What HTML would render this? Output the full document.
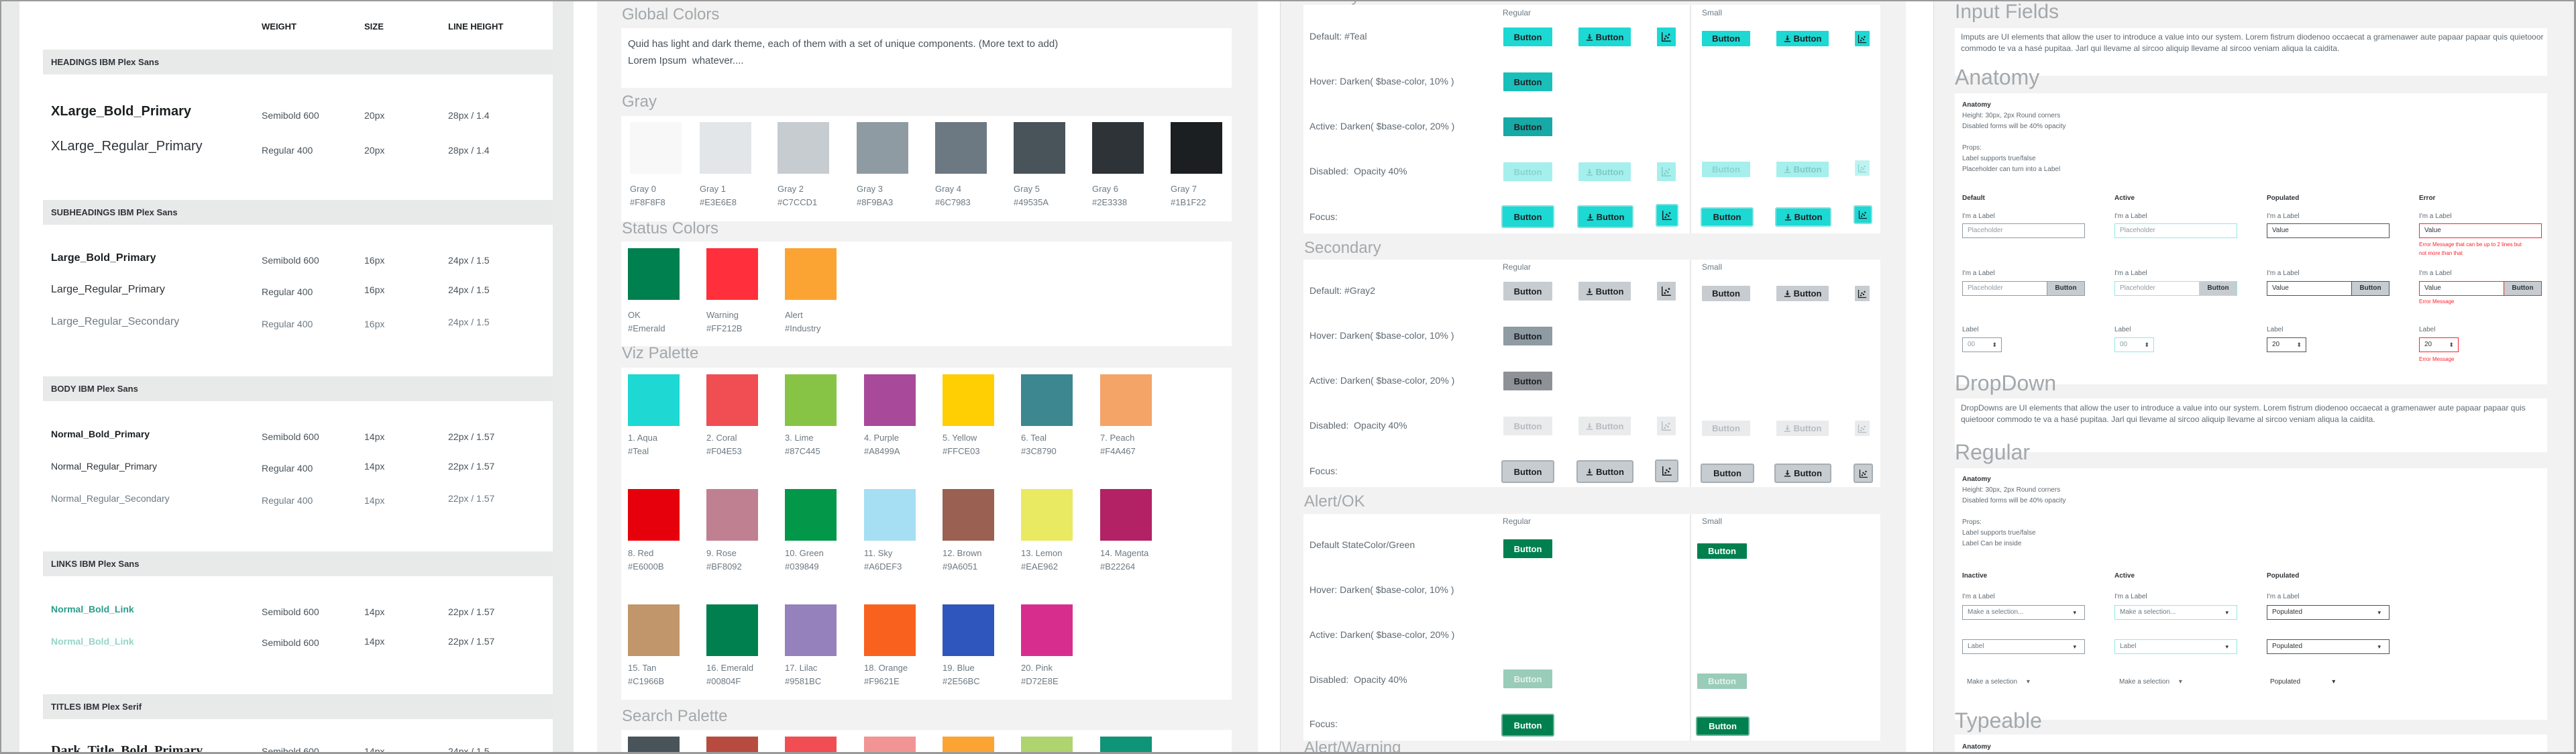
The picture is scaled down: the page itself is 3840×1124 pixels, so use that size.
<!DOCTYPE html>
<html style="width:3840px;height:1124px;overflow:hidden"><head><meta charset="utf-8">
<style>
*{margin:0;padding:0;box-sizing:border-box}
html,body{width:3840px;height:1124px;overflow:hidden}
body{position:relative;background:#fff;font-family:"Liberation Sans",sans-serif}
#root{position:absolute;left:0;top:0;width:3840px;height:1124px;overflow:hidden}
div,span{position:absolute}
.t{white-space:nowrap}
.bar{background:#e8e9e9;left:64px;width:760px;height:37px}
.bl{font-size:13px;font-weight:bold;color:#2e3338;left:12px;top:11px}
.c{font-size:14px;color:#49535a}
.gt{font-size:24px;color:#a3a8ac;left:927px}
.box{background:#fff}
.sw{width:77px;height:77px}
.lb{font-size:13px;color:#6c7983;line-height:16px}
.rl{font-size:14px;color:#5f6a73;left:1952px}
.b{height:28px;width:73px;font-size:13px;font-weight:bold;color:#1b1f22;display:flex;align-items:center;justify-content:center;gap:4px;border-radius:1px}
.s{height:23px;width:72px}
.hd{font-size:12px;color:#6c7983}
.ds{font-size:12px;color:#5f6a73;line-height:17px}
.an{font-size:10px;color:#5f6a73;line-height:16px}
.ip{height:22px;width:183px;border:1px solid #8f9ba3;font-size:10px;color:#8f9ba3;padding-left:7px;line-height:20px;background:#fff}
.ib{right:0;top:0;bottom:0;width:56px;background:#c7ccd1;color:#2e3338;font-weight:bold;text-align:center;border-left:1px solid #8f9ba3}
.sp{height:22px;width:59px;border:1px solid #8f9ba3;font-size:10px;color:#8f9ba3;padding-left:7px;line-height:20px;background:#fff}
.sp:after{content:"⬍";position:absolute;right:6px;top:0;font-size:9px;color:#49535a}
.dd{height:22px;width:183px;border:1px solid #8f9ba3;font-size:10px;color:#6c7983;padding-left:7px;line-height:20px;background:#fff}
.dd:after{content:"▾";position:absolute;right:12px;top:0;font-size:9px;color:#2e3338}
.em{font-size:8px;color:#ff212b;line-height:13px}
</style></head><body><div id="root">

<!-- PANEL 1 -->
<div style="left:0;top:0;width:855px;height:1124px;background:#e9eaea"></div>
<div style="left:29px;top:0;width:795px;height:1124px;background:#fff"></div>
<div class="t" style="left:390px;top:32px;font-size:13px;font-weight:bold;color:#1b1f22">WEIGHT</div>
<div class="t" style="left:543px;top:32px;font-size:13px;font-weight:bold;color:#1b1f22">SIZE</div>
<div class="t" style="left:668px;top:32px;font-size:13px;font-weight:bold;color:#1b1f22">LINE HEIGHT</div>

<div class="bar" style="top:74px"><span class="t bl">HEADINGS IBM Plex Sans</span></div>
<div class="t" style="left:76px;top:155px;font-size:20px;font-weight:bold;color:#1b1f22">XLarge_Bold_Primary</div>
<div class="t c" style="left:390px;top:164px">Semibold 600</div><div class="t c" style="left:543px;top:164px">20px</div><div class="t c" style="left:668px;top:164px">28px / 1.4</div>
<div class="t" style="left:76px;top:207px;font-size:20px;color:#2e3338">XLarge_Regular_Primary</div>
<div class="t c" style="left:390px;top:216px">Regular 400</div><div class="t c" style="left:543px;top:216px">20px</div><div class="t c" style="left:668px;top:216px">28px / 1.4</div>

<div class="bar" style="top:298px"><span class="t bl">SUBHEADINGS IBM Plex Sans</span></div>
<div class="t" style="left:76px;top:376px;font-size:16px;font-weight:bold;color:#1b1f22">Large_Bold_Primary</div>
<div class="t c" style="left:390px;top:380px">Semibold 600</div><div class="t c" style="left:543px;top:380px">16px</div><div class="t c" style="left:668px;top:380px">24px / 1.5</div>
<div class="t" style="left:76px;top:423px;font-size:16px;color:#2e3338">Large_Regular_Primary</div>
<div class="t c" style="left:390px;top:427px">Regular 400</div><div class="t c" style="left:543px;top:424px">16px</div><div class="t c" style="left:668px;top:424px">24px / 1.5</div>
<div class="t" style="left:76px;top:471px;font-size:16px;color:#6c7983">Large_Regular_Secondary</div>
<div class="t c" style="left:390px;top:475px;color:#6c7983">Regular 400</div><div class="t c" style="left:543px;top:475px;color:#6c7983">16px</div><div class="t c" style="left:668px;top:472px;color:#6c7983">24px / 1.5</div>

<div class="bar" style="top:561px"><span class="t bl">BODY IBM Plex Sans</span></div>
<div class="t" style="left:76px;top:639px;font-size:14px;font-weight:bold;color:#1b1f22">Normal_Bold_Primary</div>
<div class="t c" style="left:390px;top:643px">Semibold 600</div><div class="t c" style="left:543px;top:643px">14px</div><div class="t c" style="left:668px;top:643px">22px / 1.57</div>
<div class="t" style="left:76px;top:687px;font-size:14px;color:#2e3338">Normal_Regular_Primary</div>
<div class="t c" style="left:390px;top:690px">Regular 400</div><div class="t c" style="left:543px;top:687px">14px</div><div class="t c" style="left:668px;top:687px">22px / 1.57</div>
<div class="t" style="left:76px;top:735px;font-size:14px;color:#6c7983">Normal_Regular_Secondary</div>
<div class="t c" style="left:390px;top:738px;color:#6c7983">Regular 400</div><div class="t c" style="left:543px;top:738px;color:#6c7983">14px</div><div class="t c" style="left:668px;top:735px;color:#6c7983">22px / 1.57</div>

<div class="bar" style="top:822px"><span class="t bl">LINKS IBM Plex Sans</span></div>
<div class="t" style="left:76px;top:900px;font-size:14px;font-weight:bold;color:#2a9d8a">Normal_Bold_Link</div>
<div class="t c" style="left:390px;top:904px">Semibold 600</div><div class="t c" style="left:543px;top:904px">14px</div><div class="t c" style="left:668px;top:904px">22px / 1.57</div>
<div class="t" style="left:76px;top:948px;font-size:14px;font-weight:bold;color:#95d5c8">Normal_Bold_Link</div>
<div class="t c" style="left:390px;top:950px">Semibold 600</div><div class="t c" style="left:543px;top:948px">14px</div><div class="t c" style="left:668px;top:948px">22px / 1.57</div>

<div class="bar" style="top:1035px"><span class="t bl">TITLES IBM Plex Serif</span></div>
<div class="t" style="left:76px;top:1108px;font-size:20px;font-weight:bold;color:#1b1f22;font-family:'Liberation Serif',serif">Dark_Title_Bold_Primary</div>
<div class="t c" style="left:390px;top:1112px">Semibold 600</div><div class="t c" style="left:543px;top:1112px">14px</div><div class="t c" style="left:668px;top:1112px">24px / 1.5</div>

<!-- PANEL 2 -->
<div style="left:890px;top:0;width:985px;height:1124px;background:#f2f2f2"></div>
<div class="t gt" style="top:8px">Global Colors</div>
<div class="box" style="left:926px;top:42px;width:910px;height:89px"></div>
<div class="t" style="left:936px;top:53px;font-size:15px;color:#49535a;line-height:25px">Quid has light and dark theme, each of them with a set of unique components. (More text to add)<br>Lorem Ipsum&nbsp; whatever....</div>
<div class="t gt" style="top:138px">Gray</div>
<div class="box" style="left:926px;top:173px;width:910px;height:157px"></div>
<div class="sw" style="left:939px;top:182px;background:#F8F8F8"></div><div class="t lb" style="left:939px;top:274px">Gray 0<br><span style="position:static;line-height:24px">#F8F8F8</span></div>
<div class="sw" style="left:1043px;top:182px;background:#E3E6E8"></div><div class="t lb" style="left:1043px;top:274px">Gray 1<br><span style="position:static;line-height:24px">#E3E6E8</span></div>
<div class="sw" style="left:1159px;top:182px;background:#C7CCD1"></div><div class="t lb" style="left:1159px;top:274px">Gray 2<br><span style="position:static;line-height:24px">#C7CCD1</span></div>
<div class="sw" style="left:1277px;top:182px;background:#8F9BA3"></div><div class="t lb" style="left:1277px;top:274px">Gray 3<br><span style="position:static;line-height:24px">#8F9BA3</span></div>
<div class="sw" style="left:1394px;top:182px;background:#6C7983"></div><div class="t lb" style="left:1394px;top:274px">Gray 4<br><span style="position:static;line-height:24px">#6C7983</span></div>
<div class="sw" style="left:1511px;top:182px;background:#49535A"></div><div class="t lb" style="left:1511px;top:274px">Gray 5<br><span style="position:static;line-height:24px">#49535A</span></div>
<div class="sw" style="left:1628px;top:182px;background:#2E3338"></div><div class="t lb" style="left:1628px;top:274px">Gray 6<br><span style="position:static;line-height:24px">#2E3338</span></div>
<div class="sw" style="left:1745px;top:182px;background:#1B1F22"></div><div class="t lb" style="left:1745px;top:274px">Gray 7<br><span style="position:static;line-height:24px">#1B1F22</span></div>

<div class="t gt" style="top:327px">Status Colors</div>
<div class="box" style="left:926px;top:360px;width:910px;height:156px"></div>
<div class="sw" style="left:936px;top:370px;background:#00804F"></div><div class="t lb" style="left:936px;top:462px">OK<br><span style="position:static;line-height:24px">#Emerald</span></div>
<div class="sw" style="left:1053px;top:370px;background:#FF303B"></div><div class="t lb" style="left:1053px;top:462px">Warning<br><span style="position:static;line-height:24px">#FF212B</span></div>
<div class="sw" style="left:1170px;top:370px;background:#FBA434"></div><div class="t lb" style="left:1170px;top:462px">Alert<br><span style="position:static;line-height:24px">#Industry</span></div>

<div class="t gt" style="top:513px">Viz Palette</div>
<div class="box" style="left:926px;top:548px;width:910px;height:495px"></div>
<div class="sw" style="left:936px;top:558px;background:#1DD8D3"></div><div class="t lb" style="left:936px;top:645px">1. Aqua<br><span style="position:static;line-height:24px">#Teal</span></div>
<div class="sw" style="left:1053px;top:558px;background:#F04E53"></div><div class="t lb" style="left:1053px;top:645px">2. Coral<br><span style="position:static;line-height:24px">#F04E53</span></div>
<div class="sw" style="left:1170px;top:558px;background:#87C445"></div><div class="t lb" style="left:1170px;top:645px">3. Lime<br><span style="position:static;line-height:24px">#87C445</span></div>
<div class="sw" style="left:1288px;top:558px;background:#A8499A"></div><div class="t lb" style="left:1288px;top:645px">4. Purple<br><span style="position:static;line-height:24px">#A8499A</span></div>
<div class="sw" style="left:1405px;top:558px;background:#FFCE03"></div><div class="t lb" style="left:1405px;top:645px">5. Yellow<br><span style="position:static;line-height:24px">#FFCE03</span></div>
<div class="sw" style="left:1522px;top:558px;background:#3C8790"></div><div class="t lb" style="left:1522px;top:645px">6. Teal<br><span style="position:static;line-height:24px">#3C8790</span></div>
<div class="sw" style="left:1640px;top:558px;background:#F4A467"></div><div class="t lb" style="left:1640px;top:645px">7. Peach<br><span style="position:static;line-height:24px">#F4A467</span></div>
<div class="sw" style="left:936px;top:729px;background:#E6000B"></div><div class="t lb" style="left:936px;top:817px">8. Red<br><span style="position:static;line-height:24px">#E6000B</span></div>
<div class="sw" style="left:1053px;top:729px;background:#BF8092"></div><div class="t lb" style="left:1053px;top:817px">9. Rose<br><span style="position:static;line-height:24px">#BF8092</span></div>
<div class="sw" style="left:1170px;top:729px;background:#039849"></div><div class="t lb" style="left:1170px;top:817px">10. Green<br><span style="position:static;line-height:24px">#039849</span></div>
<div class="sw" style="left:1288px;top:729px;background:#A6DEF3"></div><div class="t lb" style="left:1288px;top:817px">11. Sky<br><span style="position:static;line-height:24px">#A6DEF3</span></div>
<div class="sw" style="left:1405px;top:729px;background:#9A6051"></div><div class="t lb" style="left:1405px;top:817px">12. Brown<br><span style="position:static;line-height:24px">#9A6051</span></div>
<div class="sw" style="left:1522px;top:729px;background:#EAE962"></div><div class="t lb" style="left:1522px;top:817px">13. Lemon<br><span style="position:static;line-height:24px">#EAE962</span></div>
<div class="sw" style="left:1640px;top:729px;background:#B22264"></div><div class="t lb" style="left:1640px;top:817px">14. Magenta<br><span style="position:static;line-height:24px">#B22264</span></div>
<div class="sw" style="left:936px;top:901px;background:#C1966B"></div><div class="t lb" style="left:936px;top:988px">15. Tan<br><span style="position:static;line-height:24px">#C1966B</span></div>
<div class="sw" style="left:1053px;top:901px;background:#00804F"></div><div class="t lb" style="left:1053px;top:988px">16. Emerald<br><span style="position:static;line-height:24px">#00804F</span></div>
<div class="sw" style="left:1170px;top:901px;background:#9581BC"></div><div class="t lb" style="left:1170px;top:988px">17. Lilac<br><span style="position:static;line-height:24px">#9581BC</span></div>
<div class="sw" style="left:1288px;top:901px;background:#F9621E"></div><div class="t lb" style="left:1288px;top:988px">18. Orange<br><span style="position:static;line-height:24px">#F9621E</span></div>
<div class="sw" style="left:1405px;top:901px;background:#2E56BC"></div><div class="t lb" style="left:1405px;top:988px">19. Blue<br><span style="position:static;line-height:24px">#2E56BC</span></div>
<div class="sw" style="left:1522px;top:901px;background:#D72E8E"></div><div class="t lb" style="left:1522px;top:988px">20. Pink<br><span style="position:static;line-height:24px">#D72E8E</span></div>

<div class="t gt" style="top:1054px">Search Palette</div>
<div class="box" style="left:926px;top:1088px;width:910px;height:36px"></div>
<div class="sw" style="left:936px;top:1098px;height:26px;background:#49535A"></div>
<div class="sw" style="left:1053px;top:1098px;height:26px;background:#B84B40"></div>
<div class="sw" style="left:1170px;top:1098px;height:26px;background:#F04E53"></div>
<div class="sw" style="left:1288px;top:1098px;height:26px;background:#F29494"></div>
<div class="sw" style="left:1405px;top:1098px;height:26px;background:#FBA434"></div>
<div class="sw" style="left:1522px;top:1098px;height:26px;background:#AED36F"></div>
<div class="sw" style="left:1640px;top:1098px;height:26px;background:#0F9477"></div>

<!-- PANEL 3 -->
<div style="left:1908px;top:0;width:1px;height:1124px;background:#dcdcdc"></div>
<div style="left:1909px;top:0;width:932px;height:1124px;background:#f2f2f2"></div>
<div class="box" style="left:1943px;top:7px;width:860px;height:341px"></div>
<div class="box" style="left:1943px;top:387px;width:860px;height:339px"></div>
<div class="box" style="left:1943px;top:766px;width:860px;height:338px"></div>
<div style="left:2519px;top:7px;width:2px;height:341px;background:#e8eaeb"></div>
<div style="left:2519px;top:387px;width:2px;height:339px;background:#e8eaeb"></div>
<div style="left:2519px;top:766px;width:2px;height:338px;background:#e8eaeb"></div>
<div class="t gt" style="left:1944px;top:-19px">Primary</div>
<div class="t gt" style="left:1944px;top:356px">Secondary</div>
<div class="t gt" style="left:1944px;top:734px">Alert/OK</div>
<div class="t gt" style="left:1944px;top:1101px">Alert/Warning</div>

<div class="t hd" style="left:2240px;top:12px">Regular</div><div class="t hd" style="left:2537px;top:12px">Small</div>
<div class="t hd" style="left:2240px;top:391px">Regular</div><div class="t hd" style="left:2537px;top:391px">Small</div>
<div class="t hd" style="left:2240px;top:770px">Regular</div><div class="t hd" style="left:2537px;top:770px">Small</div>

<div class="t rl" style="top:46px">Default: #Teal</div>
<div class="t rl" style="top:113px">Hover: Darken( $base-color, 10% )</div>
<div class="t rl" style="top:180px">Active: Darken( $base-color, 20% )</div>
<div class="t rl" style="top:247px">Disabled:&nbsp; Opacity 40%</div>
<div class="t rl" style="top:315px">Focus:</div>
<div class="t rl" style="top:425px">Default: #Gray2</div>
<div class="t rl" style="top:492px">Hover: Darken( $base-color, 10% )</div>
<div class="t rl" style="top:559px">Active: Darken( $base-color, 20% )</div>
<div class="t rl" style="top:626px">Disabled:&nbsp; Opacity 40%</div>
<div class="t rl" style="top:694px">Focus:</div>
<div class="t rl" style="top:804px">Default StateColor/Green</div>
<div class="t rl" style="top:871px">Hover: Darken( $base-color, 10% )</div>
<div class="t rl" style="top:938px">Active: Darken( $base-color, 20% )</div>
<div class="t rl" style="top:1005px">Disabled:&nbsp; Opacity 40%</div>
<div class="t rl" style="top:1071px">Focus:</div>

<svg width="0" height="0" style="position:absolute"><defs>
<symbol id="dl" viewBox="0 0 12 12"><path d="M5 1h2v5h2.5L6 9.2 2.5 6H5z M1 10h10v1.6H1z" fill="currentColor"/></symbol>
<symbol id="sc" viewBox="0 0 14 14"><path d="M1.5 1v11.5H13" stroke="currentColor" stroke-width="1.3" fill="none"/><circle cx="5" cy="9.5" r="1.2" fill="currentColor"/><circle cx="6.5" cy="6" r="1.2" fill="currentColor"/><circle cx="9" cy="8" r="1.2" fill="currentColor"/><circle cx="10.5" cy="4" r="1.2" fill="currentColor"/></symbol>
</defs></svg>

<div class="b" style="left:2241px;top:41px;background:#1dd8d3">Button</div>
<div class="b" style="left:2353px;top:41px;width:78px;background:#1dd8d3"><svg width="11" height="11" style="position:static"><use href="#dl"/></svg>Button</div>
<div class="b" style="left:2470px;top:41px;width:28px;background:#1dd8d3"><svg width="16" height="16" style="position:static"><use href="#sc"/></svg></div>
<div class="b s" style="left:2537px;top:46px;background:#1dd8d3">Button</div>
<div class="b s" style="left:2648px;top:46px;width:78px;background:#1dd8d3"><svg width="11" height="11" style="position:static"><use href="#dl"/></svg>Button</div>
<div class="b s" style="left:2765px;top:46px;width:22px;background:#1dd8d3"><svg width="14" height="14" style="position:static"><use href="#sc"/></svg></div>
<div class="b" style="left:2241px;top:108px;background:#1abfba">Button</div>
<div class="b" style="left:2241px;top:175px;background:#17a9a5">Button</div>
<div class="b" style="left:2241px;top:242px;background:#a5efed;color:#8ad3cf">Button</div>
<div class="b" style="left:2353px;top:242px;width:78px;background:#a5efed;color:#7fc9c5"><svg width="11" height="11" style="position:static"><use href="#dl"/></svg>Button</div>
<div class="b" style="left:2470px;top:242px;width:28px;background:#a5efed;color:#7fc9c5"><svg width="16" height="16" style="position:static"><use href="#sc"/></svg></div>
<div class="b s" style="left:2537px;top:241px;background:#a5efed;color:#8ad3cf">Button</div>
<div class="b s" style="left:2648px;top:241px;width:78px;background:#a5efed;color:#7fc9c5"><svg width="11" height="11" style="position:static"><use href="#dl"/></svg>Button</div>
<div class="b s" style="left:2765px;top:239px;width:22px;background:#bff3f1;color:#8ad3cf"><svg width="14" height="14" style="position:static"><use href="#sc"/></svg></div>
<div class="b" style="left:2238px;top:306px;width:79px;height:34px;background:#1dd8d3;border:2px solid #7ce3df;border-radius:3px">Button</div>
<div class="b" style="left:2351px;top:306px;width:84px;height:34px;background:#1dd8d3;border:2px solid #7ce3df;border-radius:3px"><svg width="11" height="11" style="position:static"><use href="#dl"/></svg>Button</div>
<div class="b" style="left:2468px;top:304px;width:34px;height:34px;background:#1dd8d3;border:2px solid #7ce3df;border-radius:3px"><svg width="16" height="16" style="position:static"><use href="#sc"/></svg></div>
<div class="b s" style="left:2535px;top:309px;width:79px;height:29px;background:#1dd8d3;border:2px solid #7ce3df;border-radius:3px">Button</div>
<div class="b s" style="left:2646px;top:309px;width:84px;height:29px;background:#1dd8d3;border:2px solid #7ce3df;border-radius:3px"><svg width="11" height="11" style="position:static"><use href="#dl"/></svg>Button</div>
<div class="b s" style="left:2763px;top:306px;width:28px;height:28px;background:#1dd8d3;border:2px solid #7ce3df;border-radius:3px"><svg width="14" height="14" style="position:static"><use href="#sc"/></svg></div>

<div class="b" style="left:2241px;top:420px;background:#c7ccd1">Button</div>
<div class="b" style="left:2353px;top:420px;width:78px;background:#c7ccd1"><svg width="11" height="11" style="position:static"><use href="#dl"/></svg>Button</div>
<div class="b" style="left:2470px;top:420px;width:28px;background:#c7ccd1"><svg width="16" height="16" style="position:static"><use href="#sc"/></svg></div>
<div class="b s" style="left:2537px;top:426px;background:#c7ccd1">Button</div>
<div class="b s" style="left:2648px;top:426px;width:78px;background:#c7ccd1"><svg width="11" height="11" style="position:static"><use href="#dl"/></svg>Button</div>
<div class="b s" style="left:2765px;top:426px;width:22px;background:#c7ccd1"><svg width="14" height="14" style="position:static"><use href="#sc"/></svg></div>
<div class="b" style="left:2241px;top:487px;background:#8f9ba3">Button</div>
<div class="b" style="left:2241px;top:554px;background:#8e9296">Button</div>
<div class="b" style="left:2241px;top:621px;background:#e9ebed;color:#b7bcc0">Button</div>
<div class="b" style="left:2353px;top:621px;width:78px;background:#e9ebed;color:#b7bcc0"><svg width="11" height="11" style="position:static"><use href="#dl"/></svg>Button</div>
<div class="b" style="left:2470px;top:621px;width:28px;background:#e9ebed;color:#b7bcc0"><svg width="16" height="16" style="position:static"><use href="#sc"/></svg></div>
<div class="b s" style="left:2537px;top:627px;background:#e9ebed;color:#b7bcc0">Button</div>
<div class="b s" style="left:2648px;top:627px;width:78px;background:#e9ebed;color:#b7bcc0"><svg width="11" height="11" style="position:static"><use href="#dl"/></svg>Button</div>
<div class="b s" style="left:2765px;top:627px;width:22px;background:#e9ebed;color:#b7bcc0"><svg width="14" height="14" style="position:static"><use href="#sc"/></svg></div>
<div class="b" style="left:2238px;top:686px;width:79px;height:34px;background:#c7ccd1;border:2px solid #a6adb3;border-radius:3px">Button</div>
<div class="b" style="left:2350px;top:686px;width:85px;height:34px;background:#c7ccd1;border:2px solid #a6adb3;border-radius:3px"><svg width="11" height="11" style="position:static"><use href="#dl"/></svg>Button</div>
<div class="b" style="left:2467px;top:685px;width:35px;height:34px;background:#c7ccd1;border:2px solid #a6adb3;border-radius:3px"><svg width="16" height="16" style="position:static"><use href="#sc"/></svg></div>
<div class="b s" style="left:2535px;top:691px;width:80px;height:29px;background:#c7ccd1;border:2px solid #a6adb3;border-radius:3px">Button</div>
<div class="b s" style="left:2645px;top:691px;width:85px;height:29px;background:#c7ccd1;border:2px solid #a6adb3;border-radius:3px"><svg width="11" height="11" style="position:static"><use href="#dl"/></svg>Button</div>
<div class="b s" style="left:2763px;top:691px;width:29px;height:29px;background:#c7ccd1;border:2px solid #a6adb3;border-radius:3px"><svg width="14" height="14" style="position:static"><use href="#sc"/></svg></div>

<div class="b" style="left:2241px;top:804px;background:#00804f;color:#fff">Button</div>
<div class="b s" style="left:2530px;top:810px;width:74px;background:#00804f;color:#fff">Button</div>
<div class="b" style="left:2241px;top:998px;background:#99ccb9;color:#e6f2ed">Button</div>
<div class="b s" style="left:2530px;top:1004px;width:74px;background:#99ccb9;color:#e6f2ed">Button</div>
<div class="b" style="left:2238px;top:1064px;width:79px;height:34px;background:#00804f;color:#fff;border:2px solid #66b395;border-radius:3px">Button</div>
<div class="b s" style="left:2528px;top:1068px;width:80px;height:29px;background:#00804f;color:#fff;border:2px solid #66b395;border-radius:3px">Button</div>

<!-- PANEL 4 -->
<div style="left:2882px;top:0;width:1px;height:1124px;background:#dcdcdc"></div>
<div style="left:2883px;top:0;width:957px;height:1124px;background:#f2f2f2"></div>
<div class="t" style="left:2914px;top:1px;font-size:30px;color:#a3a8ac">Input Fields</div>
<div class="box" style="left:2914px;top:42px;width:883px;height:71px"></div>
<div class="t ds" style="left:2923px;top:47px">Imputs are UI elements that allow the user to introduce a value into our system. Lorem fistrum diodenoo occaecat a gramenawer aute papaar papaar quis quietooor<br>commodo te va a hasé pupitaa. Jarl qui llevame al sircoo aliquip llevame al sircoo veniam aliqua la caidita.</div>
<div class="t" style="left:2914px;top:97px;font-size:32px;color:#a3a8ac">Anatomy</div>
<div class="box" style="left:2914px;top:139px;width:883px;height:434px"></div>
<div class="t an" style="left:2925px;top:149px"><b style="color:#2e3338">Anatomy</b><br>Height: 30px, 2px Round corners<br>Disabled forms will be 40% opacity<br><br>Props:<br>Label supports true/false<br>Placeholder can turn into a Label</div>

<div class="t an" style="left:2925px;top:288px;font-weight:bold;color:#2e3338">Default</div>
<div class="t an" style="left:3152px;top:288px;font-weight:bold;color:#2e3338">Active</div>
<div class="t an" style="left:3379px;top:288px;font-weight:bold;color:#2e3338">Populated</div>
<div class="t an" style="left:3606px;top:288px;font-weight:bold;color:#2e3338">Error</div>

<div class="t an" style="left:2925px;top:315px">I'm a Label</div><div class="t an" style="left:3152px;top:315px">I'm a Label</div><div class="t an" style="left:3379px;top:315px">I'm a Label</div><div class="t an" style="left:3606px;top:315px">I'm a Label</div>
<div class="ip" style="left:2925px;top:333px">Placeholder</div>
<div class="ip" style="left:3152px;top:333px;border-color:#8ee9e5">Placeholder</div>
<div class="ip" style="left:3379px;top:333px;border-color:#49535a;color:#2e3338">Value</div>
<div class="ip" style="left:3606px;top:333px;border-color:#ff212b;color:#2e3338">Value</div>
<div class="t em" style="left:3606px;top:358px">Error Message that can be up to 2 lines but<br>not more than that</div>

<div class="t an" style="left:2925px;top:400px">I'm a Label</div><div class="t an" style="left:3152px;top:400px">I'm a Label</div><div class="t an" style="left:3379px;top:400px">I'm a Label</div><div class="t an" style="left:3606px;top:400px">I'm a Label</div>
<div class="ip" style="left:2925px;top:419px">Placeholder<span class="ib">Button</span></div>
<div class="ip" style="left:3152px;top:419px;border-color:#8ee9e5">Placeholder<span class="ib" style="border-color:#8ee9e5">Button</span></div>
<div class="ip" style="left:3379px;top:419px;border-color:#49535a;color:#2e3338">Value<span class="ib" style="border-color:#49535a">Button</span></div>
<div class="ip" style="left:3606px;top:419px;border-color:#ff212b;color:#2e3338">Value<span class="ib" style="border-color:#ff212b">Button</span></div>
<div class="t em" style="left:3606px;top:443px">Error Message</div>

<div class="t an" style="left:2925px;top:484px">Label</div><div class="t an" style="left:3152px;top:484px">Label</div><div class="t an" style="left:3379px;top:484px">Label</div><div class="t an" style="left:3606px;top:484px">Label</div>
<div class="sp" style="left:2925px;top:503px">00</div>
<div class="sp" style="left:3152px;top:503px;border-color:#8ee9e5">00</div>
<div class="sp" style="left:3379px;top:503px;border-color:#49535a;color:#2e3338">20</div>
<div class="sp" style="left:3606px;top:503px;border-color:#ff212b;color:#2e3338">20</div>
<div class="t em" style="left:3606px;top:529px">Error Message</div>

<div class="t" style="left:2914px;top:553px;font-size:32px;color:#a3a8ac">DropDown</div>
<div class="box" style="left:2914px;top:594px;width:883px;height:80px"></div>
<div class="t ds" style="left:2923px;top:600px">DropDowns are UI elements that allow the user to introduce a value into our system. Lorem fistrum diodenoo occaecat a gramenawer aute papaar papaar quis<br>quietooor commodo te va a hasé pupitaa. Jarl qui llevame al sircoo aliquip llevame al sircoo veniam aliqua la caidita.</div>
<div class="t" style="left:2914px;top:656px;font-size:32px;color:#a3a8ac">Regular</div>
<div class="box" style="left:2914px;top:698px;width:883px;height:375px"></div>
<div class="t an" style="left:2925px;top:707px"><b style="color:#2e3338">Anatomy</b><br>Height: 30px, 2px Round corners<br>Disabled forms will be 40% opacity<br><br>Props:<br>Label supports true/false<br>Label Can be inside</div>
<div class="t an" style="left:2925px;top:851px;font-weight:bold;color:#2e3338">Inactive</div>
<div class="t an" style="left:3152px;top:851px;font-weight:bold;color:#2e3338">Active</div>
<div class="t an" style="left:3379px;top:851px;font-weight:bold;color:#2e3338">Populated</div>
<div class="t an" style="left:2925px;top:882px">I'm a Label</div><div class="t an" style="left:3152px;top:882px">I'm a Label</div><div class="t an" style="left:3379px;top:882px">I'm a Label</div>
<div class="dd" style="left:2925px;top:902px">Make a selection...</div>
<div class="dd" style="left:3152px;top:902px;border-color:#8ee9e5">Make a selection...</div>
<div class="dd" style="left:3379px;top:902px;border-color:#49535a;color:#2e3338">Populated</div>
<div class="dd" style="left:2925px;top:953px">Label</div>
<div class="dd" style="left:3152px;top:953px;border-color:#8ee9e5">Label</div>
<div class="dd" style="left:3379px;top:953px;border-color:#49535a;color:#2e3338">Populated</div>
<div class="t an" style="left:2932px;top:1009px">Make a selection &nbsp;&nbsp;&nbsp; ▾</div>
<div class="t an" style="left:3159px;top:1009px">Make a selection &nbsp;&nbsp;&nbsp; ▾</div>
<div class="t an" style="left:3384px;top:1009px;color:#2e3338">Populated &nbsp;&nbsp;&nbsp;&nbsp;&nbsp;&nbsp;&nbsp;&nbsp;&nbsp;&nbsp;&nbsp;&nbsp;&nbsp;&nbsp;&nbsp; ▾</div>
<div class="t" style="left:2914px;top:1056px;font-size:32px;color:#a3a8ac">Typeable</div>
<div class="box" style="left:2914px;top:1095px;width:883px;height:29px"></div>
<div class="t an" style="left:2925px;top:1106px;font-weight:bold;color:#2e3338">Anatomy</div>

<div style="left:0;top:0;width:3840px;height:1124px;border:2px solid #9a9a9a;border-bottom-width:3px;border-right-width:3px"></div>
</div></body></html>
